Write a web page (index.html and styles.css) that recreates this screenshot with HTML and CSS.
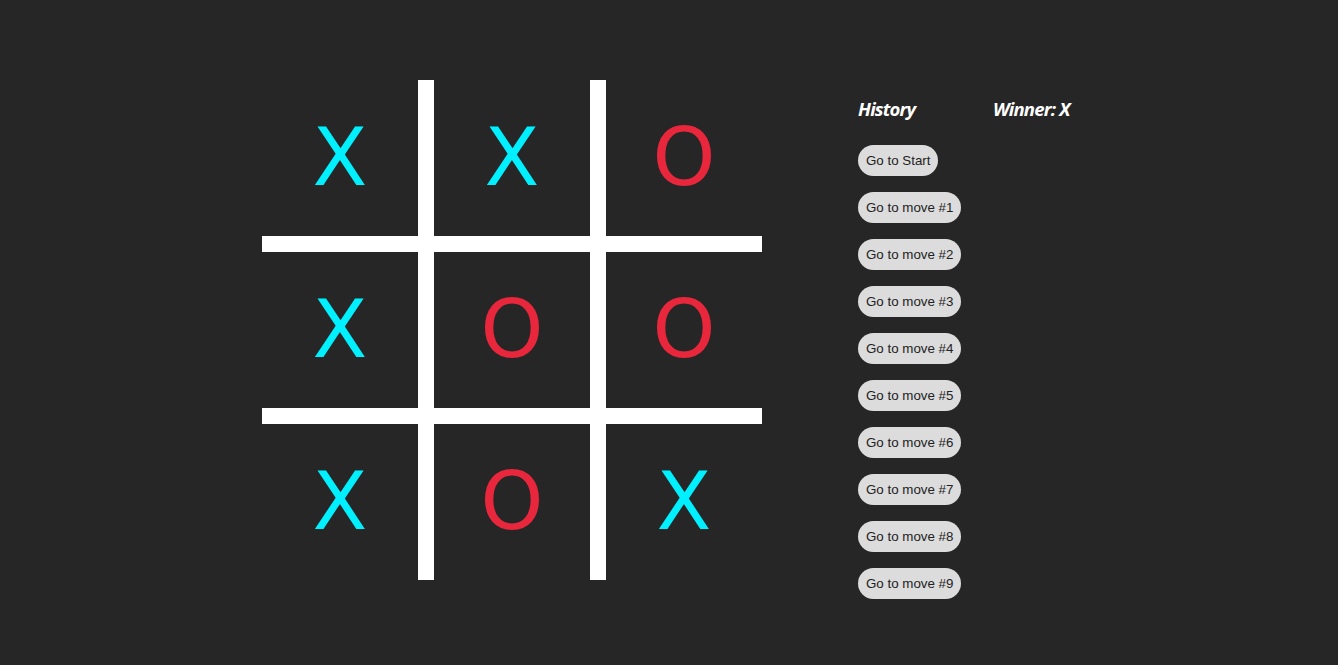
FILE: index.html
```html
<!DOCTYPE html>
<html>
<head>
<meta charset="utf-8">
<title>Tic Tac Toe</title>
<link rel="stylesheet" href="styles.css">
</head>
<body>
<div class="game">
  <div class="board">
    <div class="cell x">X</div>
    <div class="cell x">X</div>
    <div class="cell o">O</div>
    <div class="cell x">X</div>
    <div class="cell o">O</div>
    <div class="cell o">O</div>
    <div class="cell x">X</div>
    <div class="cell o">O</div>
    <div class="cell x">X</div>
  </div>
  <div class="history">
    <h3 class="heading">History</h3>
    <ol class="moves">
      <li><button class="move">Go to Start</button></li>
      <li><button class="move">Go to move #1</button></li>
      <li><button class="move">Go to move #2</button></li>
      <li><button class="move">Go to move #3</button></li>
      <li><button class="move">Go to move #4</button></li>
      <li><button class="move">Go to move #5</button></li>
      <li><button class="move">Go to move #6</button></li>
      <li><button class="move">Go to move #7</button></li>
      <li><button class="move">Go to move #8</button></li>
      <li><button class="move">Go to move #9</button></li>
    </ol>
  </div>
  <div class="status">
    <h3 class="heading">Winner: X</h3>
  </div>
</div>
</body>
</html>
```

FILE: styles.css
```css
* { box-sizing: border-box; }
html, body {
  margin: 0;
  padding: 0;
  background: #262626;
  height: 100%;
}
.game {
  display: flex;
  align-items: flex-start;
  padding-left: 262px;
  padding-top: 80px;
}
.board {
  display: grid;
  grid-template-columns: repeat(3, 156px);
  grid-template-rows: repeat(3, 156px);
  gap: 16px;
  background: #ffffff;
  width: 500px;
  height: 500px;
}
.cell {
  background: #262626;
  display: flex;
  align-items: center;
  justify-content: center;
  font-family: "DejaVu Sans", sans-serif;
  font-size: 80px;
  line-height: 1;
}
.cell.x { color: #00f0ff; }
.cell.o { color: #e9273c; }
.history {
  width: 135px;
  margin-left: 96px;
  padding-top: 16px;
}
.status {
  padding-top: 16px;
}
.heading {
  margin: 0;
  font-family: "Open Sans", sans-serif;
  font-size: 18.5px;
  font-weight: 700;
  font-style: italic;
  color: #ffffff;
  line-height: 25.5px;
  letter-spacing: -0.8px;
}
.moves {
  list-style: none;
  margin: 23px 0 0 0;
  padding: 0;
  display: flex;
  flex-direction: column;
  align-items: flex-start;
  gap: 16px;
}
.move {
  font-family: "Liberation Sans", Arial, sans-serif;
  font-size: 13.33px;
  line-height: 15px;
  color: #222222;
  background: #dcdcdc;
  border: none;
  border-radius: 16px;
  padding: 8px 8px;
  cursor: pointer;
}
```
